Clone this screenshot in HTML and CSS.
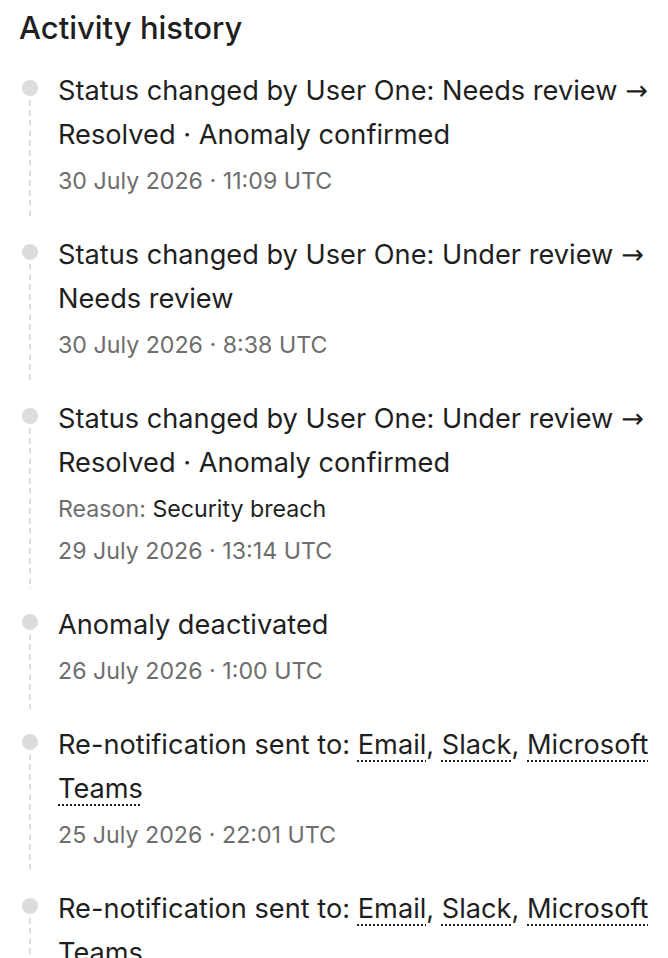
FILE: index.html
```html
<!DOCTYPE html>
<html lang="en">
<head>
<meta charset="utf-8">
<title>Activity history</title>
<link rel="stylesheet" href="styles.css">
</head>
<body>
<section class="activity">
  <h2 class="title">Activity history</h2>
  <ol class="timeline">
    <li class="item">
      <div class="rail"><span class="dot"></span><span class="line"></span></div>
      <div class="body">
        <p class="main">Status changed by User One: Needs review <span class="arrow">→</span> Resolved · Anomaly confirmed</p>
        <p class="meta">30 July 2026 · 11:09 UTC</p>
      </div>
    </li>
    <li class="item">
      <div class="rail"><span class="dot"></span><span class="line"></span></div>
      <div class="body">
        <p class="main">Status changed by User One: Under review <span class="arrow">→</span> Needs review</p>
        <p class="meta">30 July 2026 · 8:38 UTC</p>
      </div>
    </li>
    <li class="item">
      <div class="rail"><span class="dot"></span><span class="line"></span></div>
      <div class="body">
        <p class="main">Status changed by User One: Under review <span class="arrow">→</span> Resolved · Anomaly confirmed</p>
        <p class="reason"><span class="label">Reason:</span> Security breach</p>
        <p class="meta">29 July 2026 · 13:14 UTC</p>
      </div>
    </li>
    <li class="item">
      <div class="rail"><span class="dot"></span><span class="line"></span></div>
      <div class="body">
        <p class="main">Anomaly deactivated</p>
        <p class="meta">26 July 2026 · 1:00 UTC</p>
      </div>
    </li>
    <li class="item">
      <div class="rail"><span class="dot"></span><span class="line"></span></div>
      <div class="body">
        <p class="main">Re-notification sent to: <span class="ch">Email</span>, <span class="ch">Slack</span>, <span class="ch">Microsoft Teams</span></p>
        <p class="meta">25 July 2026 · 22:01 UTC</p>
      </div>
    </li>
    <li class="item">
      <div class="rail"><span class="dot"></span><span class="line"></span></div>
      <div class="body">
        <p class="main">Re-notification sent to: <span class="ch">Email</span>, <span class="ch">Slack</span>, <span class="ch">Microsoft Teams</span></p>
        <p class="meta">24 July 2026 · 22:01 UTC</p>
      </div>
    </li>
  </ol>
</section>
</body>
</html>
```

FILE: styles.css
```css
html, body {
  margin: 0;
  padding: 0;
  background: #ffffff;
}

body {
  font-family: Inter, "Noto Sans", sans-serif;
  color: #1f1f1f;
}

.activity {
  padding: 10px 0 0 19px;
}

.title {
  margin: 0;
  font-size: 31px;
  line-height: 36px;
  font-weight: 500;
  color: #1f1f1f;
}

.timeline {
  list-style: none;
  margin: 23px 0 0 0;
  padding: 0;
}

.item {
  display: flex;
  gap: 17px;
}

.rail {
  width: 22px;
  flex: none;
  display: flex;
  flex-direction: column;
  align-items: center;
  padding-top: 11px;
}

.dot {
  width: 16px;
  height: 16px;
  border-radius: 50%;
  background: #dcdcdc;
  flex: none;
}

.line {
  flex: 1;
  width: 2px;
  margin: 4px 0 14px;
  background: repeating-linear-gradient(to bottom, #e0e0e0 0 6px, transparent 6px 10px);
}

.body {
  flex: 1;
  min-width: 0;
  padding-bottom: 34px;
  padding-right: 4px;
}

.body p {
  margin: 0;
}

.main {
  font-size: 27.2px;
  line-height: 44px;
  color: #1f1f1f;
}

.arrow {
  font-family: "DejaVu Sans", "Liberation Sans", sans-serif;
}

.meta {
  margin-top: 6px !important;
  font-size: 23.2px;
  line-height: 36px;
  color: #6e6e6e;
}

.reason {
  margin-top: 6px !important;
  font-size: 23.2px;
  line-height: 36px;
  color: #1f1f1f;
}

.reason .label {
  color: #6e6e6e;
}

.ch {
  text-decoration: underline dotted #1f1f1f;
  text-decoration-thickness: 2px;
  text-underline-offset: 6px;
}
```
